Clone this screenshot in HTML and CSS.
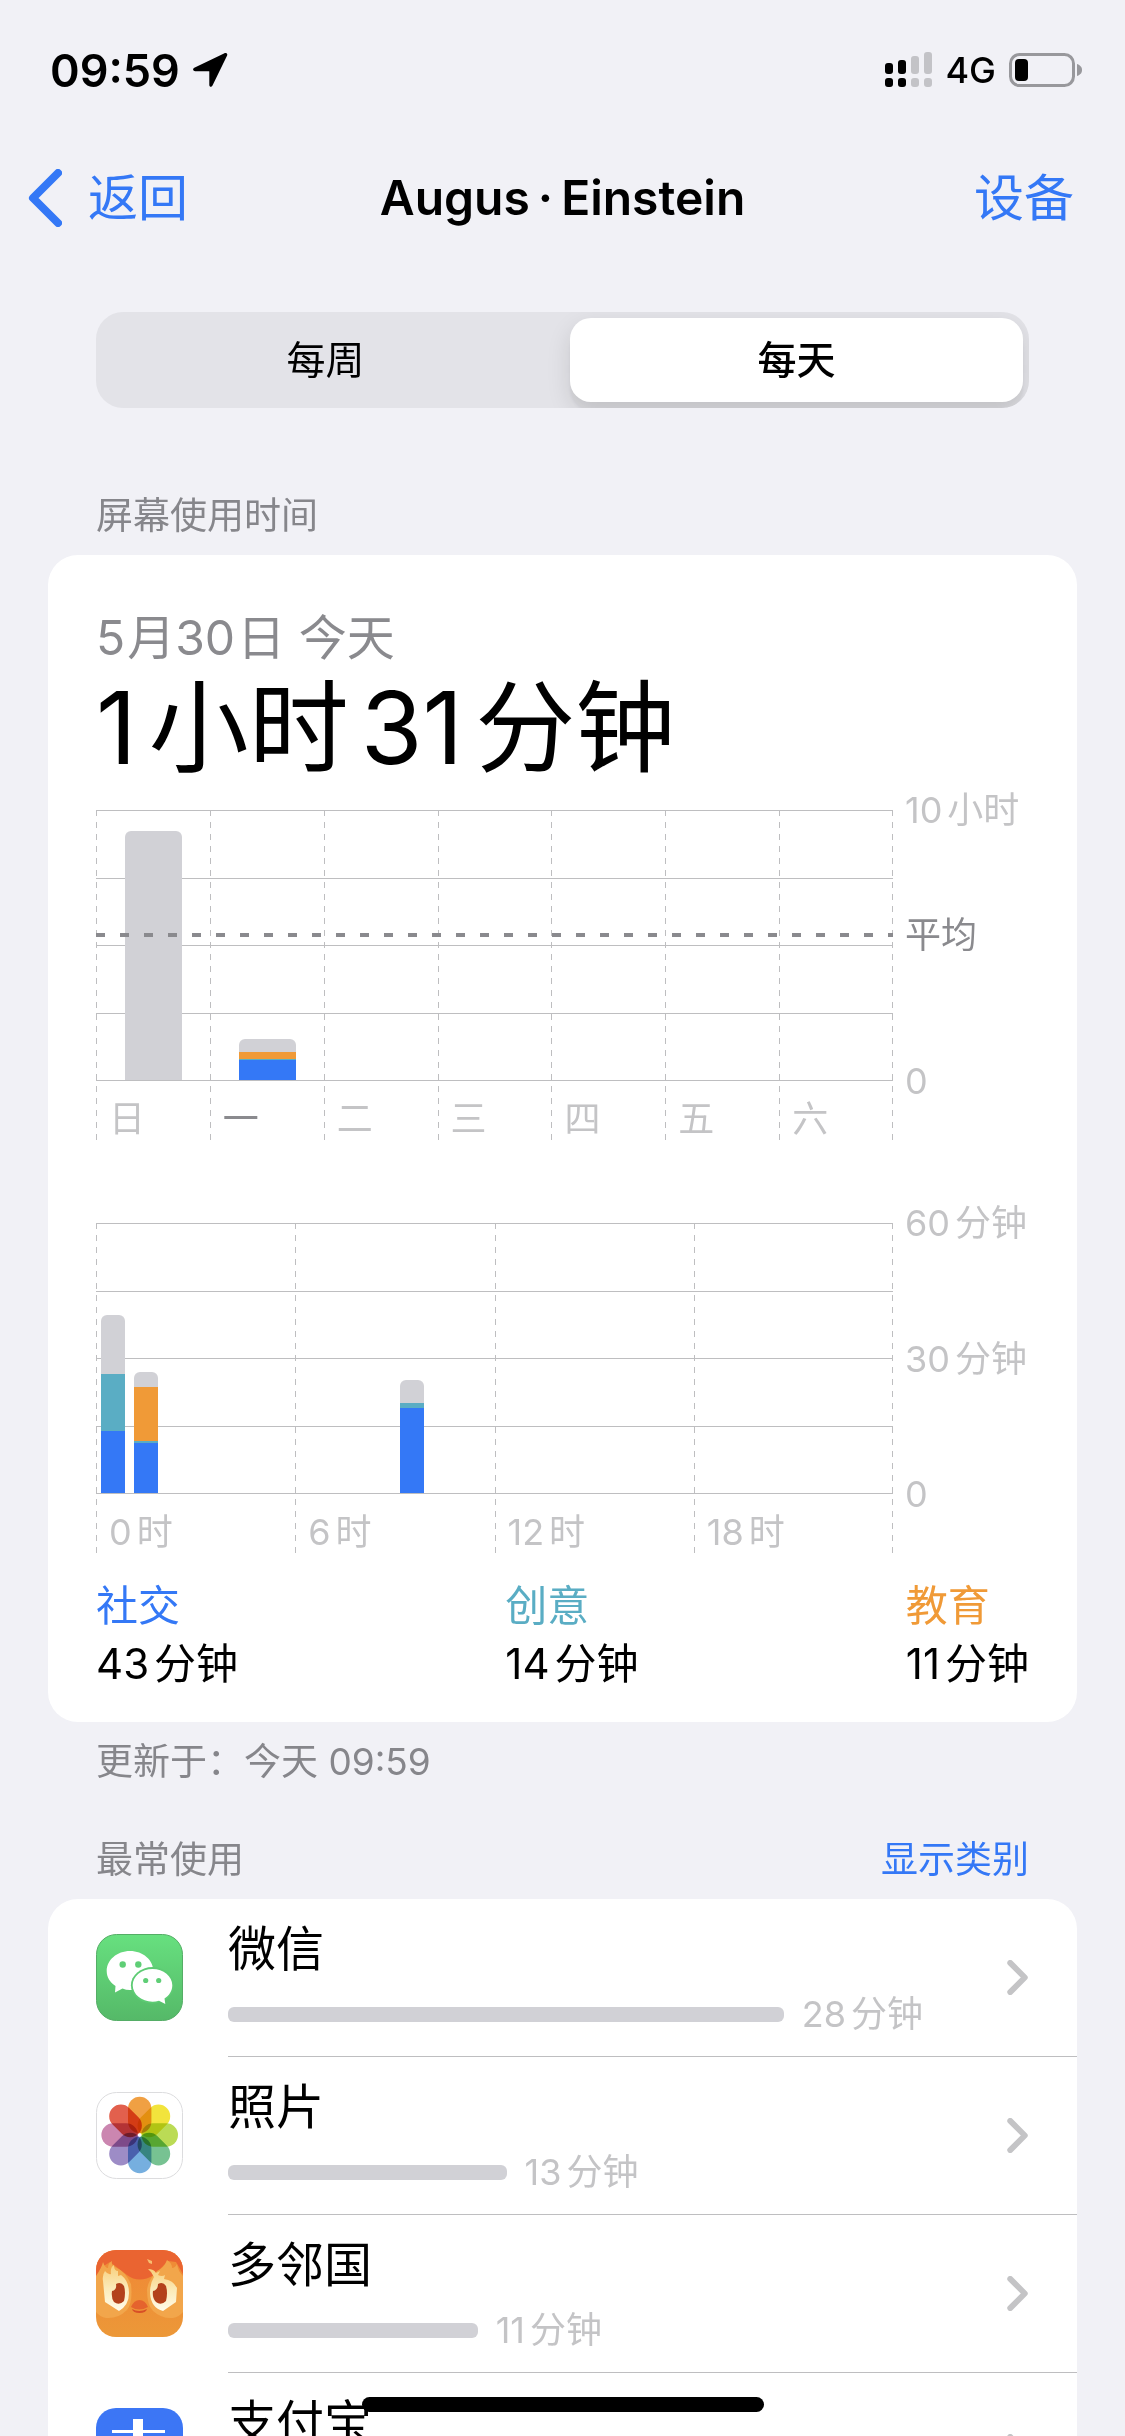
FILE: index.html
```html
<!DOCTYPE html>
<html lang="zh-CN">
<head>
<meta charset="utf-8">
<meta name="viewport" content="width=device-width, initial-scale=1">
<title>屏幕使用时间</title>
<link rel="stylesheet" href="styles.css">
</head>
<body>
<div class="app">
  <div class="status">
    <div class="status-side">
      <span class="clock">09:59</span>
      <svg class="locate" viewBox="0 0 36 36" aria-hidden="true"><path d="M34.500 1.200C35.300 1.600 35.500 2.600 35 3.800L20.500 33.500C19.500 35.500 17.300 35 17.300 32.700V19.500L17 19.200H3.300C1 19.200 .300 16.800 2.300 15.800L32 1.400C33 .9 33.900 .8 34.500 1.200Z"/></svg>
    </div>
    <div class="status-side">
      <svg class="signal" viewBox="0 0 48 36" aria-hidden="true">
        <g><rect x="0" y="11" width="8" height="11" rx="3"/><rect x="13" y="8" width="8" height="14" rx="3"/><rect x="0" y="26" width="8" height="9" rx="3"/><rect x="13" y="26" width="8" height="9" rx="3"/></g>
        <g fill="#c3c3c7"><rect x="26" y="4" width="8" height="18" rx="3"/><rect x="39" y="0" width="8" height="22" rx="3"/><rect x="26" y="26" width="8" height="9" rx="3"/><rect x="39" y="26" width="8" height="9" rx="3"/></g>
      </svg>
      <span class="network">4G</span>
      <svg class="battery" viewBox="0 0 74 34" aria-hidden="true"><rect x="1.500" y="1.500" width="63" height="31" rx="9" fill="none" stroke="#98989c" stroke-width="3"/><rect x="6" y="6" width="13" height="22" rx="4"/><path d="M68 11C72 12.500 73 14.500 73 17S72 21.500 68 23Z" fill="#98989c"/></svg>
    </div>
  </div>

  <nav class="nav">
    <a class="back" href="#back"><svg viewBox="0 0 34 58" aria-hidden="true"><path d="M30 4L5 29L30 54"/></svg>返回</a>
    <h1>Augus<span class="dot">·</span>Einstein</h1>
    <a class="devices" href="#devices">设备</a>
  </nav>

  <main>
    <div class="segments" role="radiogroup" aria-label="范围">
      <input type="radio" name="range" id="week"><label for="week">每周</label>
      <input type="radio" name="range" id="day" checked><label for="day">每天</label>
    </div>

    <div class="section-head"><h2>屏幕使用时间</h2></div>
    <section class="card summary">
      <p class="date"><span class="num">5</span>月<span class="num">30</span>日 今天</p>
      <p class="total"><span class="num">1</span>小时<span class="num">31</span>分钟</p>

      <div class="chart">
        <div class="plot week">
          <div class="lines"><i></i><i></i><i></i><i></i></div>
          <div class="col"><div class="bar"><b class="other" style="height:249px"></b></div><span>日</span></div>
          <div class="col now"><div class="bar"><b class="other" style="height:13px"></b><b class="edu" style="height:7px"></b><b class="art" style="height:1px"></b><b class="social" style="height:20px"></b></div><span>一</span></div>
          <div class="col"><div class="bar"></div><span>二</span></div>
          <div class="col"><div class="bar"></div><span>三</span></div>
          <div class="col"><div class="bar"></div><span>四</span></div>
          <div class="col"><div class="bar"></div><span>五</span></div>
          <div class="col"><div class="bar"></div><span>六</span></div>
          <div class="average" style="top:46%"></div>
        </div>
        <div class="axis"><span><span class="num">10</span>小时</span><span class="mean">平均</span><span>0</span></div>
      </div>

      <div class="chart">
        <div class="plot day">
          <div class="lines"><i></i><i></i><i></i><i></i></div>
          <div class="col"><div class="hours">
            <div class="bar"><b class="other" style="height:59px"></b><b class="art" style="height:57px"></b><b class="social" style="height:62px"></b></div>
            <div class="bar"><b class="other" style="height:15px"></b><b class="edu" style="height:54px"></b><b class="art" style="height:2px"></b><b class="social" style="height:50px"></b></div>
            <div class="bar"></div><div class="bar"></div><div class="bar"></div><div class="bar"></div></div><span><span class="num">0</span>时</span></div>
          <div class="col"><div class="hours">
            <div class="bar"></div><div class="bar"></div><div class="bar"></div>
            <div class="bar"><b class="other" style="height:23px"></b><b class="art" style="height:5px"></b><b class="social" style="height:85px"></b></div>
            <div class="bar"></div><div class="bar"></div></div><span><span class="num">6</span>时</span></div>
          <div class="col"><div class="hours"></div><span><span class="num">12</span>时</span></div>
          <div class="col"><div class="hours"></div><span><span class="num">18</span>时</span></div>
        </div>
        <div class="axis"><span><span class="num">60</span>分钟</span><span><span class="num">30</span>分钟</span><span>0</span></div>
      </div>

      <dl class="legend">
        <div><dt class="t-social">社交</dt><dd><span class="num">43</span>分钟</dd></div>
        <div><dt class="t-art">创意</dt><dd><span class="num">14</span>分钟</dd></div>
        <div><dt class="t-edu">教育</dt><dd><span class="num">11</span>分钟</dd></div>
      </dl>
    </section>
    <p class="updated">更新于：今天 09:59</p>

    <div class="section-head used"><h2>最常使用</h2><a href="#categories">显示类别</a></div>
    <section class="card apps">
      <a class="app-row" href="#wechat">
        <svg class="icon" viewBox="0 0 87 87" aria-hidden="true">
          <defs><linearGradient id="wx" x2="0" y2="1"><stop stop-color="#67e07f"/><stop offset="1" stop-color="#55b968"/></linearGradient></defs>
          <rect x=".5" y=".5" width="86" height="86" rx="20" fill="url(#wx)" stroke="#55ad66"/>
          <path fill="#fff" d="M34 17C21 17 10.700 26 10.700 37C10.700 43 14 48.500 19.500 52L19 58.500L26.500 54.500Q30 56 34 56C47 56 57.300 47.500 57.300 37C57.300 26 47 17 34 17Z"/>
          <ellipse cx="56.500" cy="51.300" rx="21.600" ry="18.200" fill="#5dcb73"/>
          <path fill="#fff" d="M56.500 35C45.500 35 36.700 42.300 36.700 51.300S45.500 67.700 56.500 67.700Q60 67.700 63 66.700L69.300 70L68.500 64.500C73.300 61.500 76.300 56.700 76.300 51.300C76.300 42.300 67.500 35 56.500 35Z"/>
          <g fill="#5fce76"><circle cx="26.700" cy="30.500" r="3.200"/><circle cx="42.300" cy="30.500" r="3.200"/><circle cx="49.700" cy="46.500" r="2.600"/><circle cx="62.700" cy="46.500" r="2.600"/></g>
        </svg>
        <div class="usage"><h3>微信</h3><div class="meter"><i style="width:75%"></i><span><span class="num">28</span>分钟</span></div></div>
        <svg class="go" viewBox="0 0 22 36" aria-hidden="true"><path d="M3 3L18 18L3 33"/></svg>
      </a>
      <a class="app-row" href="#photos">
        <svg class="icon" viewBox="0 0 87 87" aria-hidden="true">
          <rect x=".5" y=".5" width="86" height="86" rx="20" fill="#fff" stroke="#dcdcde"/>
          <g class="petals">
            <rect x="32" y="4.700" width="23.400" height="36.500" rx="11.700" fill="#f0a043"/>
            <rect x="32" y="4.700" width="23.400" height="36.500" rx="11.700" fill="#f2e43c" transform="rotate(45 43.700 43)"/>
            <rect x="32" y="4.700" width="23.400" height="36.500" rx="11.700" fill="#bbdb55" transform="rotate(90 43.700 43)"/>
            <rect x="32" y="4.700" width="23.400" height="36.500" rx="11.700" fill="#77c292" transform="rotate(135 43.700 43)"/>
            <rect x="32" y="4.700" width="23.400" height="36.500" rx="11.700" fill="#76afdf" transform="rotate(180 43.700 43)"/>
            <rect x="32" y="4.700" width="23.400" height="36.500" rx="11.700" fill="#9d8cc6" transform="rotate(225 43.700 43)"/>
            <rect x="32" y="4.700" width="23.400" height="36.500" rx="11.700" fill="#cb86b0" transform="rotate(270 43.700 43)"/>
            <rect x="32" y="4.700" width="23.400" height="36.500" rx="11.700" fill="#e2604d" transform="rotate(315 43.700 43)"/>
          </g>
        </svg>
        <div class="usage"><h3>照片</h3><div class="meter"><i style="width:37.600%"></i><span><span class="num">13</span>分钟</span></div></div>
        <svg class="go" viewBox="0 0 22 36" aria-hidden="true"><path d="M3 3L18 18L3 33"/></svg>
      </a>
      <a class="app-row" href="#duolingo">
        <svg class="icon" viewBox="0 0 87 87" aria-hidden="true">
          <defs>
            <clipPath id="tile"><rect width="87" height="87" rx="20"/></clipPath>
            <linearGradient id="duo" x2="0" y2="1"><stop offset=".3" stop-color="#ef8c36"/><stop offset="1" stop-color="#ec9838"/></linearGradient>
            <linearGradient id="eye" x2="0" y2="1"><stop stop-color="#f8cf7c"/><stop offset=".5" stop-color="#fbeab8"/><stop offset="1" stop-color="#fffbea"/></linearGradient>
          </defs>
          <g clip-path="url(#tile)">
            <rect width="87" height="87" fill="url(#duo)"/>
            <path fill="#ea6431" d="M0 0H87V24L80 12L72 11L58 25Q43 34 31 25L14 12L6 17L0 30Z"/>
            <path fill="#f2a64b" d="M0 26Q6 17 7 12Q9 18 12 18Q12 13 16 11Q15 16 19 17Q30 22 35 34Q37 52 31 60Q22 69 10 68Q4 67 0 62Z"/>
            <path fill="#f2a64b" d="M87 26Q82 21 81 14Q79 18 76 18Q76 13 71 10Q68 18 61 21Q52 30 51 40Q51 55 57 61Q66 69 77 68Q83 67 87 62Z"/>
            <path fill="url(#eye)" d="M7 31Q6 25 9 21Q12 25 15 24Q14 17 18 15Q18 21 22 21L22 26L25 25Q33 31 33 43Q33 55 23 61L9 52Z"/>
            <path fill="url(#eye)" d="M55 22L52 19Q58 19 60 23L64 21L62 25Q66 27 69 25L68 29Q77 30 81 38L80 52L67 61Q55 58 54 43Q54 33 58 27Z"/>
            <path fill="#f8bd70" d="M51 9L56 11L56 14L53 13Z"/>
            <path fill="#b3411b" d="M20 34Q25 31 28 36Q30 42 28 51Q23 56 18 52Q15 48 16 41Q21 40 20 34ZM62 34Q67 31 70 36Q72 43 70 51Q65 56 60 52Q56 48 57 41Q62 40 62 34Z"/>
            <path fill="#e5632d" d="M35 57Q38 50 43.500 50T52 57Q43 62 35 57Z"/>
            <path fill="#d84f26" d="M36 59Q43 63 51 59Q50 63 43.500 63T36 59Z"/>
          </g>
        </svg>
        <div class="usage"><h3>多邻国</h3><div class="meter"><i style="width:33.700%"></i><span><span class="num">11</span>分钟</span></div></div>
        <svg class="go" viewBox="0 0 22 36" aria-hidden="true"><path d="M3 3L18 18L3 33"/></svg>
      </a>
      <a class="app-row" href="#alipay">
        <svg class="icon" viewBox="0 0 87 87" aria-hidden="true">
          <rect width="87" height="87" rx="20" fill="#3c76f5"/>
          <path fill="#fff" d="M37 11H47V22H69V25H47V34H64Q62 44 56 52L87 65V74L51 58Q42 70 28 70Q13 69 13 58Q15 47 29 47Q38 48 48 51Q52 46 54 38H21V34H37V25H16V22H37Z"/>
        </svg>
        <div class="usage"><h3>支付宝</h3></div>
        <svg class="go" viewBox="0 0 22 36" aria-hidden="true"><path d="M3 3L18 18L3 33"/></svg>
      </a>
    </section>
  </main>
  <div class="home-indicator"></div>
</div>
</body>
</html>
```
FILE: styles.css
```css
* { box-sizing: border-box; margin: 0; padding: 0; }

body {
  background: #f1f1f6;
  color: #000;
  font-family: Inter, "Noto Sans CJK SC", sans-serif;
  font-size: 36px;
  font-weight: 400;
}

a { color: #3478f6; text-decoration: none; }
h1, h2, h3 { font-weight: 400; }
i, b { display: block; font-style: normal; }

.app {
  position: relative;
  display: flex;
  flex-direction: column;
  height: 100vh;
  overflow: hidden;
}

/* status bar */
.status {
  flex: none;
  display: flex;
  justify-content: space-between;
  align-items: center;
  height: 140px;
  padding: 0 42px 0 50px;
}
.status-side { display: flex; align-items: center; }
.clock { font-size: 45px; font-weight: 600; }
.locate { width: 36px; height: 36px; margin-left: 12px; }
.signal { width: 48px; height: 36px; }
.network { margin: 0 13px 0 12px; font-weight: 500; }
.battery { width: 74px; height: 34px; }

/* navigation */
.nav {
  flex: none;
  display: grid;
  grid-template-columns: 1fr auto 1fr;
  align-items: center;
  height: 116px;
  padding: 0 28px;
  font-size: 50px;
  line-height: 60px;
}
.nav h1 { font-size: 48px; font-weight: 600; }
.dot { margin: 0 8px; }
.back { display: flex; align-items: center; gap: 26px; }
.back svg { width: 34px; height: 58px; fill: none; stroke: #3478f6; stroke-width: 8; stroke-linecap: round; stroke-linejoin: round; }
.devices { justify-self: end; margin-right: 23px; }

main { flex: 1; min-height: 0; padding: 56px 48px 0; overflow: hidden; }

/* segmented control */
.segments {
  display: grid;
  grid-template-columns: 1fr 1fr;
  column-gap: 9px;
  height: 96px;
  margin: 0 48px;
  padding: 6px 6px 6px 0;
  border-radius: 27px;
  background: #e3e3e8;
  overflow: hidden;
  font-size: 39px;
  line-height: 48px;
}
.segments input { position: absolute; opacity: 0; }
.segments label { display: grid; place-items: center; border-radius: 21px; }
.segments input:checked + label {
  margin-left: 6px;
  background: #fff;
  box-shadow: 0 9px 24px rgba(0, 0, 0, .12), 0 9px 3px rgba(0, 0, 0, .04);
  font-weight: 500;
}

/* section headings */
.section-head {
  display: flex;
  justify-content: space-between;
  margin: 84px 48px 15px;
  font-size: 37px;
  line-height: 48px;
}
.section-head.used { margin-top: 50px; }
.section-head h2 { font-size: 37px; color: #86868b; }
.card { border-radius: 30px; background: #fff; overflow: hidden; }

/* summary */
.summary { padding: 53px 48px 29px; }
.num { margin-right: 5px; }
.date { color: #8a8a8e; font-size: 48px; line-height: 60px; }
.date .num { margin-right: 2px; }
.total { margin-top: 4px; font-size: 100px; line-height: 112px; }
.total .num { margin-right: 12px; }
.total .num + .num { margin-left: 12px; }

.chart { display: grid; grid-template-columns: 1fr 136px; margin-top: 26px; color: #c4c4c6; }
.chart + .chart { margin-top: 82px; }
.plot { position: relative; display: grid; height: 331px; }
.plot.week { grid-template-columns: repeat(7, 1fr); }
.plot.day { grid-template-columns: repeat(4, 1fr); }
.lines {
  position: absolute;
  top: 0;
  left: 0;
  right: 0;
  height: 271px;
  display: grid;
  grid-template-rows: repeat(4, 1fr);
  border-bottom: 1px solid #bebec0;
}
.lines i { border-top: 1px solid #bebec0; }
.col, .plot {
  background: repeating-linear-gradient(#bebec0 0 6px, transparent 6px 12px) left top / 1px 100% no-repeat;
}
.plot { background-position: right top; }
.col { position: relative; display: grid; grid-template-rows: 270px 61px; }
.col > span { padding-left: 13px; line-height: 78px; }
.col.now > span { color: #8a8a8e; }
.hours { display: grid; grid-template-columns: repeat(6, 1fr); }
.bar { display: flex; flex-direction: column; justify-content: flex-end; }
.week .bar { width: 57px; margin-left: 29px; }
.day .bar { width: 24px; margin-left: 5px; }
.bar b:first-child { border-radius: 6px 6px 0 0; }
.other { background: #d1d1d6; }
.social { background: #3478f6; }
.art { background: #5aadc4; }
.edu { background: #f09a37; }
.average {
  position: absolute;
  left: 0;
  right: 0;
  height: 4px;
  margin-top: -29px;
  background: repeating-linear-gradient(90deg, #8a8a8e 0 9px, transparent 9px 24px);
}
.axis {
  display: flex;
  flex-direction: column;
  justify-content: space-between;
  height: 307px;
  margin-top: -18px;
  padding-left: 12px;
  line-height: 36px;
  white-space: nowrap;
}
.mean { margin-bottom: 22px; color: #8a8a8e; }

.legend { display: flex; justify-content: space-between; margin-top: 23px; font-size: 42px; line-height: 58px; }
.t-social { color: #3478f6; }
.t-art { color: #5aadc4; }
.t-edu { color: #f09a37; }
.updated { margin: 16px 48px 0; color: #86868b; font-size: 37px; line-height: 48px; }

/* most used apps */
.app-row { display: flex; height: 158px; padding-left: 48px; color: #000; }
.icon { flex: none; width: 87px; height: 87px; margin: 35px 45px 0 0; }
.petals { isolation: isolate; }
.petals rect { mix-blend-mode: multiply; }
.usage { flex: 1; padding: 20px 38px 0 0; border-bottom: 1px solid #bebec0; }
.usage h3 { font-size: 48px; line-height: 60px; }
.meter { display: flex; align-items: center; gap: 18px; margin-top: 15px; color: #c4c4c6; line-height: 40px; white-space: nowrap; }
.meter i { height: 15px; border-radius: 6px; background: #d1d1d6; }
.go {
  flex: none;
  width: 70px;
  height: 158px;
  padding: 61px 48px 61px 0;
  border-bottom: 1px solid #bebec0;
  fill: none;
  stroke: #c4c4c6;
  stroke-width: 6;
  stroke-linecap: round;
  stroke-linejoin: round;
}

.home-indicator {
  position: absolute;
  left: 50%;
  bottom: 24px;
  width: 402px;
  height: 15px;
  border-radius: 8px;
  background: #000;
  transform: translateX(-50%);
}
```
